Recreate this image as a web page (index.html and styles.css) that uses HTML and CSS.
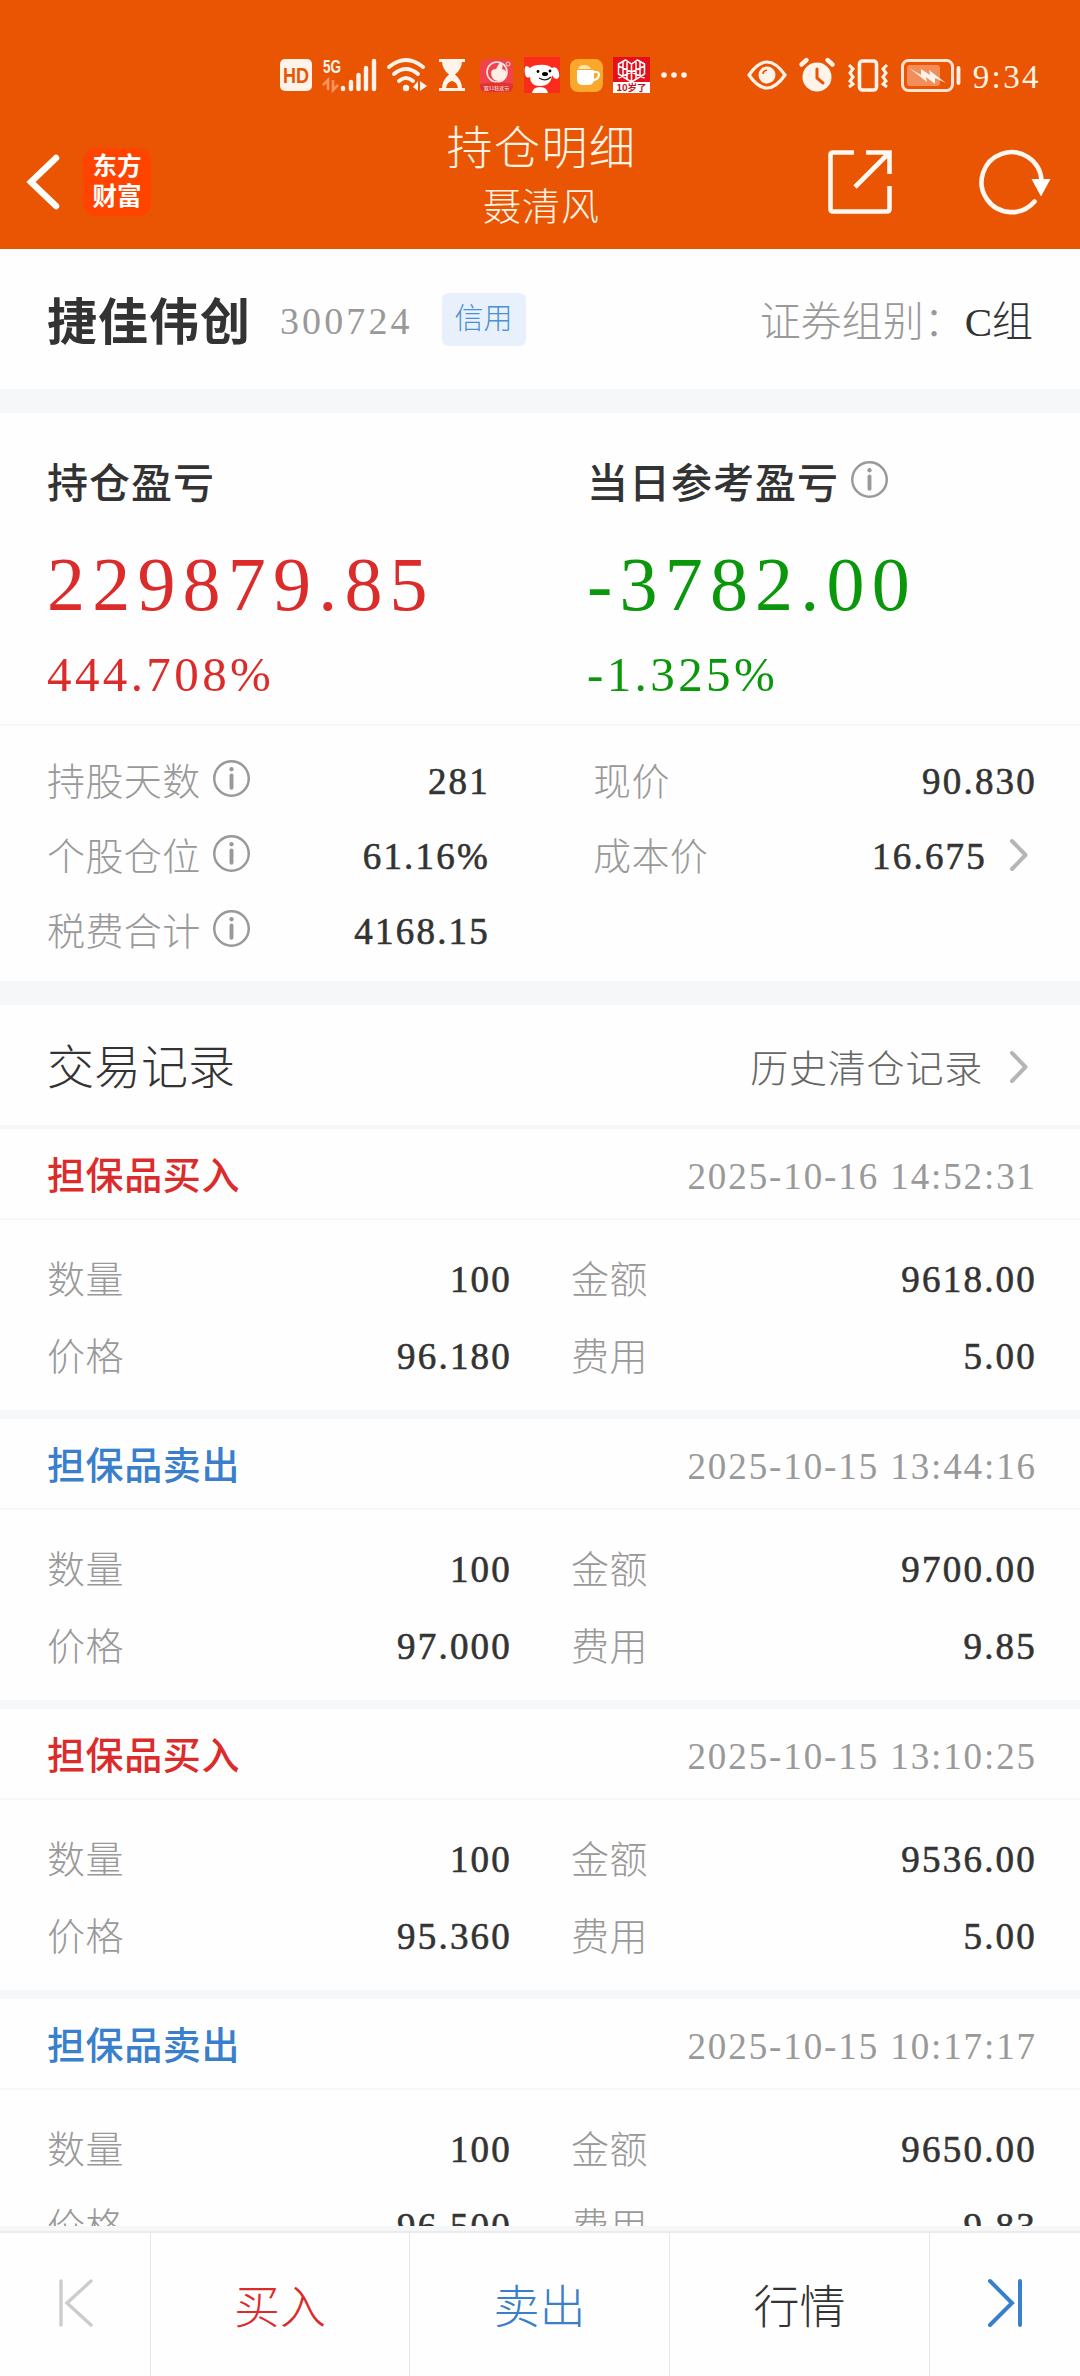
FILE: index.html
```html
<!DOCTYPE html>
<html lang="zh-CN">
<head>
  <meta charset="UTF-8" />
  <meta name="viewport" content="width=device-width, initial-scale=1.0"/>
  <title>持仓明细</title>
  <link rel="stylesheet" href="styles.css">
</head>
<body>

  <svg class="defs" width="0" height="0">
    <symbol id="info" viewBox="0 0 36 36">
      <circle cx="18" cy="18" r="16.8" fill="none" stroke="#999" stroke-width="2.4"/>
      <circle cx="18" cy="9" r="2.1" fill="#999"/>
      <path d="M18 15v12" stroke="#999" stroke-width="3.8" stroke-linecap="round"/>
    </symbol>
    <symbol id="chevron" viewBox="0 0 20 34">
      <path d="M3 3l13.500 14L3 31" fill="none" stroke="#b5b5b5" stroke-width="4" stroke-linecap="round" stroke-linejoin="round"/>
    </symbol>
  </svg>

  <header class="header">
    <div class="status">
      <div class="status-left">
        <svg width="34" height="36" viewBox="0 0 34 36">
          <rect x="1" y="2" width="32" height="32" rx="5" fill="#fff3ea"/>
          <text x="17" y="25.500" text-anchor="middle" textLength="26" lengthAdjust="spacingAndGlyphs" class="hd">HD</text>
        </svg>
        <svg width="54" height="36" viewBox="0 0 54 36">
          <text x="0" y="15.500" textLength="18" lengthAdjust="spacingAndGlyphs" class="net">5G</text>
          <path d="M0 28l5-5v10M10 23v10l5-5" fill="none" stroke="#f7935c" stroke-width="2.600"/>
          <path d="M20 31v1M28 25v7M35.500 18v14M43 11v21M51 4v28" stroke="#fff3ea" stroke-width="4.400" stroke-linecap="round"/>
        </svg>
        <svg width="40" height="36" viewBox="0 0 40 36">
          <path d="M2 10q17-14 34 0M7 17q12-10 24 0M12 24q7-6 14 0" fill="none" stroke="#fff3ea" stroke-width="4" stroke-linecap="round"/>
          <circle cx="19" cy="31" r="3.200" fill="#fff3ea"/>
          <path d="M26 30l5-6v10zM33 24v10l7-5z" fill="#fff3ea"/>
        </svg>
        <svg class="hourglass" width="26" height="36" viewBox="0 0 26 36">
          <path d="M0 2h26v3H0zM0 31h26v3H0z" fill="#fff3ea"/>
          <path d="M3 4h20q0 8-7 13.500q7 5.500 7 14.500H3q0-9 7-14.500Q3 12 3 4z" fill="#fff3ea"/>
          <path d="M7 31q1-6 6-7q5 1 6 7z" fill="#ea5504"/>
        </svg>
        <svg width="34" height="36" viewBox="0 0 34 36">
          <rect x="0" y="2" width="33" height="33" rx="7" fill="#f1434c"/>
          <circle cx="17" cy="15" r="10" fill="none" stroke="#ffe6e0" stroke-width="1.600"/>
          <path d="M11 15q1-3 5-3l4-7q4 1 2 7q5 1 4 5q0 7-7 7q-8 0-8-9z" fill="#fff0e6"/>
          <circle cx="28" cy="7" r="2" fill="none" stroke="#ffd9d4"/>
          <path d="M0 27q17-3 33 0v2q0 6-6 6H6q-6 0-6-6z" fill="#e0322f"/>
          <text x="16.500" y="32.500" text-anchor="middle" class="tiny">双11狂欢节</text>
        </svg>
        <svg width="36" height="36" viewBox="0 0 36 36">
          <rect width="36" height="36" fill="#fb2c1c"/>
          <path d="M6 11q3-3 9-3q8-1 13 3q4-2 6 2q3 7-1 9q-3 0-5-4q-1 11-12 11q-10 0-10-9q-4 2-5-3q-1-7 1-8q2 0 4 2z" fill="#fff"/>
          <path d="M8 36q1-6 8-6t8 6z" fill="#fff"/>
          <circle cx="14" cy="14.500" r="1.400"/><circle cx="26" cy="14" r="1.400"/>
          <ellipse cx="21" cy="17" rx="3" ry="2"/>
          <path d="M15 21q7 4 12-1" fill="none" stroke="#222" stroke-width="1.200"/>
        </svg>
        <svg width="33" height="36" viewBox="0 0 33 36">
          <rect y="2" width="33" height="33" rx="8" fill="#faa82c"/>
          <path d="M7 13h17v9q0 6-6 6h-5q-6 0-6-6z" fill="#fff"/>
          <path d="M24 15h2q3 0 3 3q-1 5-6 5" fill="none" stroke="#fff" stroke-width="2"/>
          <path d="M8 12q1-4 6-4t7 4" fill="#ffe3b0"/>
        </svg>
        <svg width="37" height="36" viewBox="0 0 37 36">
          <rect width="37" height="36" fill="#e60f1c"/>
          <path d="M5.500 7l7-4l6 4l6-4l7 4v10l-13 8l-13-8zM18.500 7v18M5.500 9l26 12M31.500 9l-26 12M10 5v14M14 5v17M23 5v17M27 5v14" fill="none" stroke="#fff" stroke-width="1.500"/>
          <rect y="25" width="37" height="11" fill="#fff"/>
          <text x="18.500" y="34" text-anchor="middle" class="ten">10岁了</text>
        </svg>
        <svg width="28" height="36" viewBox="0 0 28 36" fill="#fff3ea">
          <circle cx="4" cy="18" r="2.800"/><circle cx="14" cy="18" r="2.800"/><circle cx="24" cy="18" r="2.800"/>
        </svg>
      </div>
      <div class="status-right">
        <svg width="40" height="36" viewBox="0 0 40 36">
          <path d="M2 18Q20-8 38 18Q20 44 2 18z" fill="none" stroke="#fff3ea" stroke-width="3.200" stroke-linejoin="round"/>
          <circle cx="20" cy="18" r="8.500" fill="#fff3ea"/>
          <path d="M16 17q0-3 4-4" fill="none" stroke="#ea5504" stroke-width="1.800"/>
        </svg>
        <svg width="36" height="36" viewBox="0 0 36 36">
          <circle cx="18" cy="20" r="14.500" fill="#fff3ea"/>
          <path d="M2.500 7.500l5-4.500M33.500 7.500l-5-4.500" stroke="#fff3ea" stroke-width="4.400" stroke-linecap="round"/>
          <path d="M18 12v9l6 5" fill="none" stroke="#ea5504" stroke-width="3" stroke-linecap="round"/>
        </svg>
        <svg width="42" height="36" viewBox="0 0 42 36" fill="none" stroke="#fff3ea">
          <rect x="12.500" y="4" width="17" height="29" rx="3" stroke-width="3.600"/>
          <path d="M2 8l4 4l-3 4l3 4l-3 4l3 3l-4 3M40 8l-4 4l3 4l-3 4l3 4l-3 3l4 3" stroke-width="3"/>
        </svg>
        <svg width="60" height="36" viewBox="0 0 60 36">
          <rect x="1.500" y="3.500" width="50" height="30" rx="6" fill="none" stroke="#ffe3d2" stroke-width="3"/>
          <rect x="6" y="8" width="33" height="21" rx="3" fill="#f38e5a"/>
          <path d="M8 11l12 7l0-6l9 6l-1-5l17 13l-11-5v6l-9-7l1 5z" fill="#fff3ea"/>
          <path d="M57.500 11v15" stroke="#fff3ea" stroke-width="3.800" stroke-linecap="round"/>
        </svg>
        <span class="time">9:34</span>
      </div>
    </div>
    <div class="titlebar">
      <div class="titlebar-side">
        <svg width="34" height="56" viewBox="0 0 34 56">
          <path d="M30 4L5 28l25 24" fill="none" stroke="#fff" stroke-width="6.500" stroke-linecap="round" stroke-linejoin="miter"/>
        </svg>
        <div class="logo"><span>东方</span><span>财富</span></div>
      </div>
      <div class="title">
        <h1>持仓明细</h1>
        <div class="account">聂清风</div>
      </div>
      <div class="titlebar-side right">
        <svg width="64" height="64" viewBox="0 0 64 64" fill="none" stroke="#fff8f0" stroke-width="4.600">
          <path d="M26 2.500H5q-2.500 0-2.500 2.500v54q0 2.500 2.500 2.500h54q2.500 0 2.500-2.500V36"/>
          <path d="M38 2.500h23.500V24M61 3L27 37"/>
        </svg>
        <svg width="72" height="66" viewBox="0 0 72 66">
          <path d="M54.500 52.500A30 30 0 1 1 61.500 31" fill="none" stroke="#fff8f0" stroke-width="4.600" stroke-linecap="round"/>
          <path d="M51.500 30h19l-9.500 17.500z" fill="#fff"/>
        </svg>
      </div>
    </div>
  </header>

  <main class="content">
    <section class="stock">
      <span class="stock-name">捷佳伟创</span>
      <span class="stock-code">300724</span>
      <span class="tag">信用</span>
      <span class="group"><span class="group-label">证券组别：</span>C组</span>
    </section>

    <section class="profit">
      <div class="profit-item red">
        <h2>持仓盈亏</h2>
        <div class="amount">229879.85</div>
        <div class="percent">444.708%</div>
      </div>
      <div class="profit-item green">
        <h2>当日参考盈亏<svg class="info"><use href="#info"/></svg></h2>
        <div class="amount">-3782.00</div>
        <div class="percent">-1.325%</div>
      </div>
    </section>

    <section class="stats">
      <div class="cell"><label>持股天数<svg class="info"><use href="#info"/></svg></label><b>281</b></div>
      <div class="cell"><label>现价</label><b>90.830</b></div>
      <div class="cell"><label>个股仓位<svg class="info"><use href="#info"/></svg></label><b>61.16%</b></div>
      <div class="cell"><label>成本价</label><b>16.675</b><svg class="chevron"><use href="#chevron"/></svg></div>
      <div class="cell"><label>税费合计<svg class="info"><use href="#info"/></svg></label><b>4168.15</b></div>
    </section>

    <section class="records-title">
      <h3>交易记录</h3>
      <a class="history">历史清仓记录<svg class="chevron"><use href="#chevron"/></svg></a>
    </section>

    <section class="record">
      <div class="record-head"><span class="type red">担保品买入</span><time>2025-10-16 14:52:31</time></div>
      <div class="record-body">
        <div class="cell"><label>数量</label><b>100</b></div>
        <div class="cell"><label>金额</label><b>9618.00</b></div>
        <div class="cell"><label>价格</label><b>96.180</b></div>
        <div class="cell"><label>费用</label><b>5.00</b></div>
      </div>
    </section>

    <section class="record">
      <div class="record-head"><span class="type blue">担保品卖出</span><time>2025-10-15 13:44:16</time></div>
      <div class="record-body">
        <div class="cell"><label>数量</label><b>100</b></div>
        <div class="cell"><label>金额</label><b>9700.00</b></div>
        <div class="cell"><label>价格</label><b>97.000</b></div>
        <div class="cell"><label>费用</label><b>9.85</b></div>
      </div>
    </section>

    <section class="record">
      <div class="record-head"><span class="type red">担保品买入</span><time>2025-10-15 13:10:25</time></div>
      <div class="record-body">
        <div class="cell"><label>数量</label><b>100</b></div>
        <div class="cell"><label>金额</label><b>9536.00</b></div>
        <div class="cell"><label>价格</label><b>95.360</b></div>
        <div class="cell"><label>费用</label><b>5.00</b></div>
      </div>
    </section>

    <section class="record">
      <div class="record-head"><span class="type blue">担保品卖出</span><time>2025-10-15 10:17:17</time></div>
      <div class="record-body">
        <div class="cell"><label>数量</label><b>100</b></div>
        <div class="cell"><label>金额</label><b>9650.00</b></div>
        <div class="cell"><label>价格</label><b>96.500</b></div>
        <div class="cell"><label>费用</label><b>9.83</b></div>
      </div>
    </section>
  </main>

  <nav class="bottom">
    <a>
      <svg width="36" height="50" viewBox="0 0 36 50" fill="none" stroke="#ccc" stroke-width="3.400" stroke-linecap="round">
        <path d="M4 3v44M34 3L10 25l24 22"/>
      </svg>
    </a>
    <a class="red">买入</a>
    <a class="blue">卖出</a>
    <a>行情</a>
    <a>
      <svg width="36" height="50" viewBox="0 0 36 50" fill="none" stroke="#3a7fcb" stroke-width="4" stroke-linecap="round">
        <path d="M33 3v44M3 3l22 22L3 47"/>
      </svg>
    </a>
  </nav>

</body>
</html>
```
FILE: styles.css
```css
* {
  box-sizing: border-box;
}
body {
  margin: 0;
  height: 2376px;
  display: flex;
  flex-direction: column;
  font-family: "Liberation Serif", "Noto Sans CJK SC", serif;
  font-size: 38px;
  font-weight: 300;
  color: #333;
  background: #f6f7f9;
}
h1, h2, h3 {
  margin: 0;
}
svg {
  display: block;
  flex: none;
  overflow: visible;
}
.defs {
  position: absolute;
}
.red { color: #dc2b2b; }
.green { color: #0b970b; }
.blue { color: #3a7fcb; }

/* header */
.header {
  flex: none;
  height: 249px;
  background: #ea5504;
  color: #fff3e4;
}
.status {
  display: flex;
  justify-content: space-between;
  height: 108px;
  padding: 57px 39px 0 279px;
}
.status-left,
.status-right {
  display: flex;
  align-items: center;
  height: 36px;
}
.status-left {
  gap: 10px;
}
.status-left .hourglass {
  margin: 0 5px 0 2px;
}
.status-right {
  gap: 12px;
}
.time {
  font-size: 33px;
  letter-spacing: 2.4px;
  padding-top: 4px;
}
.hd {
  font: bold 22px "Liberation Sans", sans-serif;
  fill: #ea5504;
}
.net {
  font: bold 19px "Liberation Sans", sans-serif;
  fill: #fff3ea;
}
.tiny {
  font: 5px "Noto Sans CJK SC", sans-serif;
  fill: #fff;
}
.ten {
  font: bold 9.5px "Noto Sans CJK SC", sans-serif;
  fill: #c4141c;
}
.titlebar {
  display: flex;
  justify-content: space-between;
  height: 141px;
}
.titlebar-side {
  display: flex;
  align-items: center;
  width: 300px;
  height: 147px;
  padding-left: 26px;
}
.titlebar-side.right {
  justify-content: flex-end;
  gap: 88px;
  padding: 0 28px 0 0;
}
.logo {
  display: flex;
  flex-direction: column;
  align-items: center;
  justify-content: center;
  width: 68px;
  height: 68px;
  margin-left: 23px;
  padding-bottom: 3px;
  border-radius: 13px;
  background: #ff4400;
  color: #fff;
  font: 700 24.5px/30px "Noto Sans CJK SC", sans-serif;
}
.title {
  text-align: center;
  padding: 12px 0 0 3px;
}
.title h1 {
  font-size: 46px;
  font-weight: 300;
  line-height: 57px;
  letter-spacing: 1.5px;
}
.account {
  font-size: 38px;
  line-height: 60px;
  letter-spacing: 1px;
}

/* content, last record is cut by the bottom bar */
.content {
  flex: none;
  height: 1977px;
  overflow: hidden;
}
.content section {
  background: #fefefe;
}
.stock {
  display: flex;
  align-items: center;
  height: 140px;
  padding: 0 47px;
}
.stock-name {
  padding-bottom: 3px;
  font-size: 50px;
  font-weight: bold;
  letter-spacing: 1px;
}
.stock-code {
  margin-left: 29px;
  padding-top: 4px;
  color: #999;
  letter-spacing: 3.1px;
}
.tag {
  width: 84px;
  height: 53px;
  margin-left: 29px;
  border-radius: 6px;
  background: #e8f1fb;
  color: #4a90d6;
  font-size: 29px;
  line-height: 53px;
  text-align: center;
}
.group {
  margin-left: auto;
  padding-bottom: 3px;
  font-size: 41px;
}
.group-label {
  color: #999;
}
.profit {
  display: grid;
  grid-template-columns: 540px 446px;
  height: 313px;
  margin-top: 24px;
  padding: 34px 47px 0;
  border-bottom: 2px solid #f5f6f7;
}
.profit h2 {
  display: flex;
  align-items: center;
  height: 68px;
  padding-bottom: 3px;
  color: #333;
  font-size: 41px;
  font-weight: 500;
  letter-spacing: 1px;
}
.amount {
  font-size: 76px;
  line-height: 138px;
  letter-spacing: 7.2px;
}
.percent {
  font-size: 49px;
  line-height: 44px;
  letter-spacing: 3.4px;
}
.info {
  width: 37px;
  height: 37px;
  margin-left: 12px;
}
.stats {
  display: grid;
  grid-template-columns: 443px 444px;
  grid-auto-rows: 75px;
  column-gap: 103px;
  height: 255px;
  padding: 16px 43px 0 47px;
}
.cell {
  display: flex;
  align-items: center;
  justify-content: space-between;
}
.cell label {
  display: flex;
  align-items: center;
  padding-bottom: 3px;
  color: #999;
  font-size: 38px;
  letter-spacing: .4px;
}
.cell b {
  margin-left: auto;
  padding-top: 3px;
  font-size: 37px;
  font-weight: normal;
  letter-spacing: 2.2px;
  -webkit-text-stroke: .6px #333;
}
.chevron {
  width: 20px;
  height: 34px;
  margin: 0 8px 0 22px;
}
.records-title {
  display: flex;
  align-items: center;
  justify-content: space-between;
  height: 120px;
  margin: 24px 0 4px;
  padding: 0 43px 0 47px;
}
.records-title h3 {
  padding-bottom: 3px;
  font-size: 47px;
  font-weight: 300;
}
.history {
  display: flex;
  align-items: center;
  color: #666;
  letter-spacing: .8px;
}
.history .chevron {
  margin-left: 26px;
  margin-top: 4px;
}
.record {
  height: 281px;
  margin-bottom: 9px;
}
.record-head {
  display: flex;
  align-items: center;
  justify-content: space-between;
  height: 91px;
  padding: 0 43px 0 47px;
  border-bottom: 2px solid #f5f6f7;
}
.type {
  padding-bottom: 2px;
  font-weight: 500;
  letter-spacing: .6px;
}
.record-head time {
  padding-top: 6px;
  color: #999;
  font-size: 37px;
  letter-spacing: 1.9px;
}
.record-body {
  display: grid;
  grid-template-columns: 465px 466px;
  grid-auto-rows: 77px;
  column-gap: 59px;
  padding: 19px 43px 0 47px;
}

/* bottom bar */
.bottom {
  flex: none;
  display: grid;
  grid-template-columns: 151px 259px 260px 260px 150px;
  height: 145px;
  margin-top: 5px;
  border-top: 2px solid #ebebeb;
  background: #fefefe;
}
.bottom a {
  display: flex;
  align-items: center;
  justify-content: center;
  padding-bottom: 3px;
  border-right: 1px solid #e8e8e8;
  font-size: 46px;
}
.bottom a:last-child {
  border-right: none;
}
```
